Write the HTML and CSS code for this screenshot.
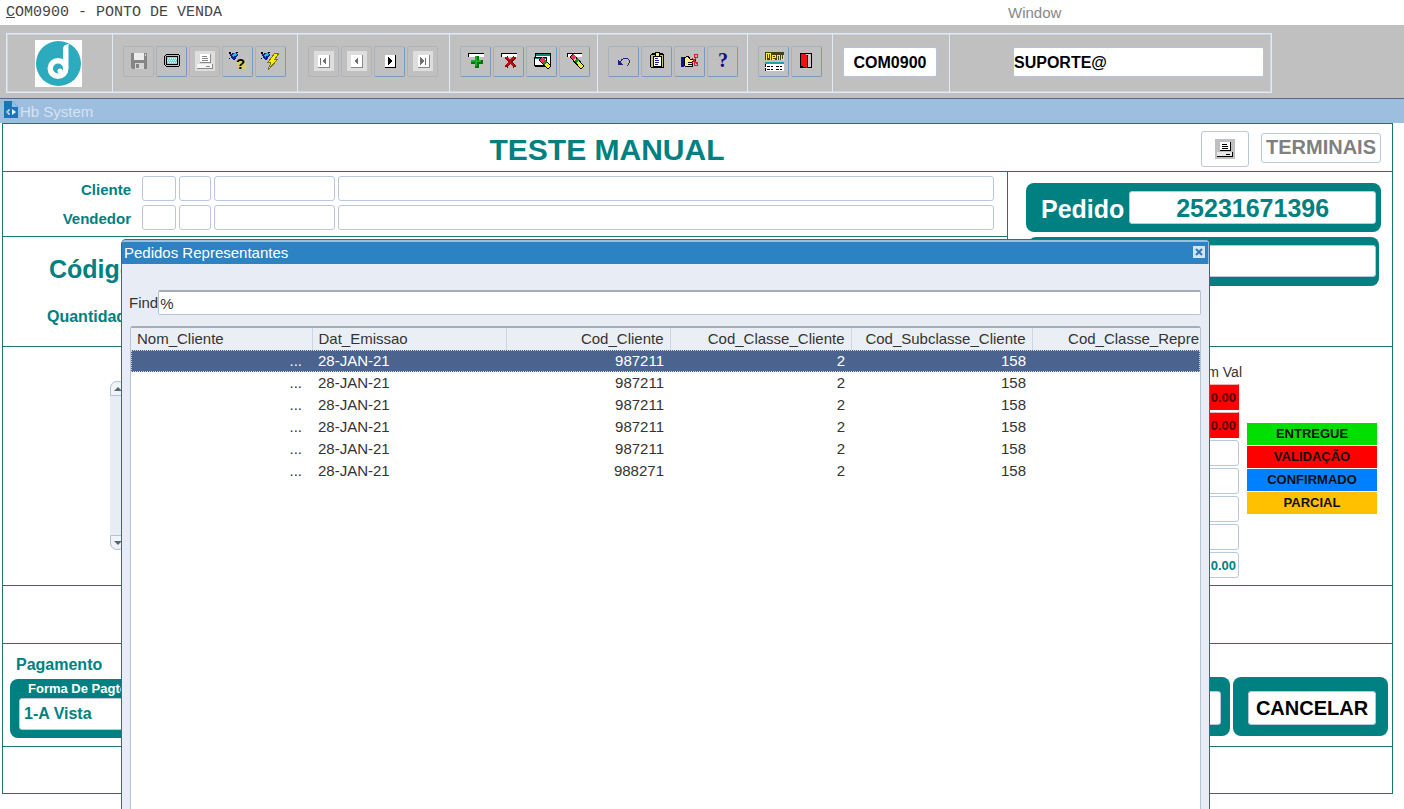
FILE: index.html
```html
<!DOCTYPE html>
<html lang="pt-BR">
<head>
<meta charset="UTF-8">
<meta name="viewport" content="width=device-width, initial-scale=1.0">
<title>COM0900 - PONTO DE VENDA</title>
<link rel="stylesheet" href="styles.css">
</head>
<body>
<nav class="menubar">
    <a class="menu-program" href="#"><u>C</u>OM0900 - PONTO DE VENDA</a>
    <a class="menu-window" href="#">Window</a>
</nav>

<header class="toolbar">
    <div class="frame">
        <div class="group group-logo">
            <svg class="logo" viewBox="0 0 47 47">
                <rect width="47" height="47" fill="#fff"/>
                <circle cx="23.5" cy="23.5" r="22.5" fill="#2cabbf"/>
                <circle cx="23" cy="28.500" r="10.500" fill="#fff"/>
                <path d="M28 9C28 6 30 4.500 34 4C33 6 33.500 8 33.500 11V28L28 29Z" fill="#fff"/>
                <circle cx="23" cy="28.500" r="5" fill="#2cabbf"/>
                <circle cx="25" cy="31" r="2.500" fill="#fff"/>
            </svg>
        </div>
        <div class="group">
            <button class="tool off" type="button" aria-label="Salvar" disabled>
                <svg viewBox="0 0 20 20"><path d="M2 2H18V18H3L2 17Z" fill="#858585"/><path d="M5 2H15V9H5Z" fill="#ececec"/><path d="M6 12H15V18H6Z" fill="#d5d5d5"/><path d="M7 13H10V17H7Z" fill="#858585"/><path d="M16 3H17V5H16Z" fill="#ddd"/></svg>
            </button>
            <button class="tool" type="button" aria-label="Tela">
                <svg viewBox="0 0 20 20"><path d="M4 3H16L18 5V14L16 16H4L2 14V5Z" fill="#000"/><path d="M4 4H16L17 5V14L16 15H4L3 14V5Z" fill="#bbb"/><path d="M4 5H16V14H4Z" fill="#000"/><path d="M5 6H15V13H5Z" fill="#80d8e0"/><path d="M6 7.500H15M5 9.500H14M6 11.500H15" stroke="#d8ffff" stroke-dasharray="1 1"/></svg>
            </button>
            <button class="tool off" type="button" aria-label="Imprimir" disabled>
                <svg viewBox="0 0 20 20"><path d="M0 0H20V20H0Z" fill="#dedede"/><path d="M5 3H15V11H5Z" fill="#fff"/><path d="M15.500 3V11.500H5" stroke="#888" fill="none"/><path d="M7 5.500H12M7 7.500H13M7 9.500H13" stroke="#888"/><path d="M2 13H18V18H2Z" fill="#f6f6f6"/><path d="M2 17.500H18M11 15.500H15M17.500 13V18" stroke="#888"/></svg>
            </button>
            <button class="tool" type="button" aria-label="Ajuda da consulta">
                <svg viewBox="0 0 20 20"><path d="M2 3L8 1L10 4L6 10L3 7Z" fill="#102090"/><path d="M4 4L8 1L9 4L5 6Z" fill="#28c0c8"/><path d="M1 1H3V3H1ZM8 1H10V2H8ZM1 7H2V8H1Z" fill="#000"/><path d="M9 9H18V18H10Z" fill="#d9cf72"/><text class="glyph" x="8" y="18">?</text></svg>
            </button>
            <button class="tool" type="button" aria-label="Executar consulta">
                <svg viewBox="0 0 20 20"><path d="M1 3L7 1L9 4L5 10L2 7Z" fill="#102090"/><path d="M3 4L7 1L8 4L4 6Z" fill="#28c0c8"/><path d="M0 1H2V3H0ZM7 1H9V2H7ZM0 7H1V8H0Z" fill="#000"/><path d="M14 2H18L14 8H17L7 19L10 11H7Z" fill="#ffee00" stroke="#777700"/></svg>
            </button>
        </div>
        <div class="group">
            <button class="tool off" type="button" aria-label="Primeiro" disabled>
                <svg viewBox="0 0 20 20"><path d="M0 0H20V20H0Z" fill="#dedede"/><path d="M4 4H15V16H4Z" fill="#fff"/><path d="M15.500 4V16.500H4" fill="none" stroke="#888"/><path d="M6 7H7V14H6ZM12 6V14L8 10Z" fill="#707070"/></svg>
            </button>
            <button class="tool off" type="button" aria-label="Anterior" disabled>
                <svg viewBox="0 0 20 20"><path d="M0 0H20V20H0Z" fill="#dedede"/><path d="M4 4H15V16H4Z" fill="#fff"/><path d="M15.500 4V16.500H4" fill="none" stroke="#888"/><path d="M11 6V14L7 10Z" fill="#707070"/></svg>
            </button>
            <button class="tool" type="button" aria-label="Próximo">
                <svg viewBox="0 0 20 20"><path d="M5 4H15V16H5Z" fill="#fff"/><path d="M15.500 4V16.500H5" fill="none" stroke="#000"/><path d="M8 6V14L12 10Z" fill="#000"/></svg>
            </button>
            <button class="tool off" type="button" aria-label="Último" disabled>
                <svg viewBox="0 0 20 20"><path d="M0 0H20V20H0Z" fill="#dedede"/><path d="M5 4H16V16H5Z" fill="#fff"/><path d="M16.500 4V16.500H5" fill="none" stroke="#888"/><path d="M7 6V14L11 10ZM12 7H13V14H12Z" fill="#707070"/></svg>
            </button>
        </div>
        <div class="group">
            <button class="tool" type="button" aria-label="Inserir registro">
                <svg viewBox="0 0 20 20"><path d="M2 2H18V6H2Z" fill="#fff"/><path d="M18 2.500H2.500V6" fill="none" stroke="#000"/><path d="M9 5H13V9H17V13H13V17H9V13H5V9H9Z" fill="#087010"/><path d="M9 5H11V9H15V11H11V15H9V11H5V9H9Z" fill="#18b028"/></svg>
            </button>
            <button class="tool" type="button" aria-label="Excluir registro">
                <svg viewBox="0 0 20 20"><path d="M2 2H18V6H2Z" fill="#fff"/><path d="M18 2.500H2.500V6" fill="none" stroke="#000"/><path d="M7 6L16 16M16 6L7 16" stroke="#800408" stroke-width="3"/><path d="M7 6L15 15M15 6L7 15" stroke="#b81018" stroke-width="2"/></svg>
            </button>
            <button class="tool" type="button" aria-label="Limpar tela">
                <svg viewBox="0 0 20 20"><path d="M3 2H18V15H3Z" fill="#fff" stroke="#000"/><path d="M4 3H18V5H4Z" fill="#108080"/><path d="M2 6H14V14H2Z" fill="#fff" stroke="#000"/><path d="M3 7H14V8H3Z" fill="#108080"/><path d="M7 9L10 6L19 15L16 18Z" fill="#f0e830" stroke="#000"/><path d="M7 9L10 6L13 9L10 12Z" fill="#f03060"/><path d="M10 12L13 9L15 11L12 14Z" fill="#109020"/></svg>
            </button>
            <button class="tool" type="button" aria-label="Limpar registro">
                <svg viewBox="0 0 20 20"><path d="M2 2H17V6H2Z" fill="#fff"/><path d="M17 2.500H2.500V6" fill="none" stroke="#000"/><path d="M5 6L8 3L19 15L16 18Z" fill="#f0e830" stroke="#000"/><path d="M5 6L8 3L11 6L8 9Z" fill="#f03060"/><path d="M9 10L12 7L14 9L11 12Z" fill="#109020"/></svg>
            </button>
        </div>
        <div class="group">
            <button class="tool" type="button" aria-label="Desfazer">
                <svg viewBox="0 0 20 20"><path d="M6 11C8 7 13 6 15 9C16 11 15 13 13 15" fill="none" stroke="#202080"/><path d="M4 9V14H9Z" fill="#202080"/></svg>
            </button>
            <button class="tool" type="button" aria-label="Lista">
                <svg viewBox="0 0 20 20"><path d="M3 4L5 2H16L17 4V16L16 17H4L3 16Z" fill="#000"/><path d="M4 4H16V16H4Z" fill="#c9c35e"/><path d="M6 5H14V15H6Z" fill="#fff" stroke="#000"/><path d="M8 1H12V5H8Z" fill="#f0f080" stroke="#000"/><path d="M8 7.500H11M8 9.500H12M8 11.500H12M8 13.500H11" stroke="#202090"/></svg>
            </button>
            <button class="tool" type="button" aria-label="Recortar">
                <svg viewBox="0 0 20 20"><path d="M1 6H4V16H1Z" fill="#101090"/><path d="M4 7L8 5L10 8H15V10H12V15H5Z" fill="#f0ee90" stroke="#000"/><path d="M8 11.500H12M8 13.500H12" stroke="#000"/><path d="M12 12L17 6M12 7L17 13" stroke="#d02030"/><circle cx="16" cy="5" r="2" fill="none" stroke="#d02030"/><circle cx="16" cy="13" r="2" fill="none" stroke="#d02030"/></svg>
            </button>
            <button class="tool" type="button" aria-label="Ajuda">
                <svg viewBox="0 0 20 20"><text class="glyph glyph-help" x="5" y="16">?</text></svg>
            </button>
        </div>
        <div class="group">
            <button class="tool" type="button" aria-label="Menu">
                <svg viewBox="0 0 20 20"><path d="M1 1H20V9H1Z" fill="#444410"/><path d="M2.500 9V2.500H6.500V9M4.500 2V7M11 8.500H8.500V4.500H11.500V6.500H8M13.500 9V4.500H15.500V9M17.500 4V8.500H19.500V4" fill="none" stroke="#ffee20"/><path d="M1 11H20V13H1Z" fill="#20a0a8"/><path d="M1 13H20V20H1Z" fill="#fff"/><path d="M1.500 13V20M3 15.500H9M3 18.500H9M12 15.500H18M12 18.500H18" stroke="#000" stroke-dasharray="3 1"/></svg>
            </button>
            <button class="tool" type="button" aria-label="Sair">
                <svg viewBox="0 0 20 20"><path d="M3 2H15V17H3Z" fill="#000"/><path d="M9 3H14V16H9Z" fill="#c8c8c8"/><path d="M4 3H8L10 5V17L4 15Z" fill="#f01010"/><path d="M10.500 4V17" stroke="#000"/></svg>
            </button>
        </div>
        <div class="group">
            <input class="tb-input tb-code" type="text" value="COM0900" aria-label="Programa">
        </div>
        <div class="group group-user">
            <input class="tb-input tb-user" type="text" value="SUPORTE@" aria-label="Usuário">
        </div>
    </div>
</header>

<main class="desktop">
    <div class="titlebar">
        <svg class="doc-icon" viewBox="0 0 14 17"><path d="M0 0H8L14 6V17H0Z" fill="#1e74b8"/><path d="M8 0V6H14Z" fill="#8fc0e4"/><path d="M8 8L12 11L8 14Z" fill="#fff"/><path d="M2 11H3M6 9H4V13H6" stroke="#fff" fill="none"/></svg>
        <span>Hb System</span>
    </div>

    <form class="pos">
        <div class="row row-title">
            <h1>TESTE MANUAL</h1>
            <button class="btn btn-print" type="button" aria-label="Imprimir pedido">
                <svg viewBox="0 0 20 20"><path d="M0 0H20V20H0Z" fill="#c0c0c0"/><path d="M5 3H15V11H5Z" fill="#fff"/><path d="M15.500 3V11.500H5M7 5.500H12M7 7.500H13M7 9.500H13" stroke="#000" fill="none"/><path d="M2 13H17V17H2Z" fill="#e8e8e8"/><path d="M2 17.500H18M11 15.500H15M17.500 13V18" stroke="#000"/></svg>
            </button>
            <button class="btn btn-term" type="button">TERMINAIS</button>
        </div>

        <div class="top">
            <div class="top-left">
                <div class="people">
                    <label for="cliente">Cliente</label>
                    <input id="cliente" class="field" type="text">
                    <input class="field" type="text" aria-label="Cliente classe">
                    <input class="field" type="text" aria-label="Cliente código">
                    <input class="field" type="text" aria-label="Cliente nome">
                    <label for="vendedor">Vendedor</label>
                    <input id="vendedor" class="field" type="text">
                    <input class="field" type="text" aria-label="Vendedor classe">
                    <input class="field" type="text" aria-label="Vendedor código">
                    <input class="field" type="text" aria-label="Vendedor nome">
                </div>
                <div class="product">
                    <span class="codigo">Código</span>
                    <span class="quantidade">Quantidade</span>
                </div>
            </div>
            <div class="top-right">
                <div class="box box-pedido">
                    <label for="pedido">Pedido</label>
                    <input id="pedido" class="field" type="text" value="25231671396">
                </div>
                <div class="box box-valor">
                    <input class="field" type="text" aria-label="Valor">
                </div>
            </div>
        </div>

        <div class="row row-items">
            <div class="scroll">
                <button type="button" aria-label="Subir"><svg viewBox="0 0 8 4"><path d="M0 4L4 0L8 4Z" fill="#56657c"/></svg></button>
                <button type="button" aria-label="Descer"><svg viewBox="0 0 8 4"><path d="M0 0H8L4 4Z" fill="#56657c"/></svg></button>
            </div>
            <div class="values">
                <span class="values-head">Item Val</span>
                <input class="field red" type="text" value="0.00" aria-label="Valor 1">
                <input class="field red" type="text" value="0.00" aria-label="Valor 2">
                <input class="field" type="text" aria-label="Valor 3">
                <input class="field" type="text" aria-label="Valor 4">
                <input class="field" type="text" aria-label="Valor 5">
                <input class="field" type="text" aria-label="Valor 6">
                <input class="field" type="text" value="0.00" aria-label="Total">
            </div>
            <ul class="legend">
                <li class="entregue">ENTREGUE</li>
                <li class="validacao">VALIDAÇÃO</li>
                <li class="confirmado">CONFIRMADO</li>
                <li class="parcial">PARCIAL</li>
            </ul>
        </div>

        <div class="row row-blank"></div>

        <div class="row row-pay">
            <div class="pay">
                <span class="pay-title">Pagamento</span>
                <div class="box box-forma">
                    <label for="forma">Forma De Pagto</label>
                    <input id="forma" class="field" type="text" value="1-A Vista">
                </div>
            </div>
            <div class="box box-action box-ok"><button class="btn" type="button" aria-label="Confirmar"></button></div>
            <div class="box box-action"><button class="btn" type="button">CANCELAR</button></div>
        </div>

        <div class="row row-foot"></div>
    </form>

    <section class="dialog" role="dialog" aria-label="Pedidos Representantes">
        <div class="dialog-title">
            <span>Pedidos Representantes</span>
            <button class="close" type="button" aria-label="Fechar"><svg viewBox="0 0 12 12"><path d="M3 3L9 9M9 3L3 9" stroke="#2e78b8" stroke-width="2"/></svg></button>
        </div>
        <div class="dialog-body">
            <div class="find">
                <label for="find">Find</label>
                <input id="find" type="text" value="%">
            </div>
            <div class="grid">
                <table>
                    <colgroup>
                        <col class="c-nome"><col class="c-data"><col class="c-cod"><col class="c-classe"><col class="c-classe"><col>
                    </colgroup>
                    <thead>
                        <tr><th class="txt">Nom_Cliente</th><th class="txt">Dat_Emissao</th><th>Cod_Cliente</th><th>Cod_Classe_Cliente</th><th>Cod_Subclasse_Cliente</th><th class="last">Cod_Classe_Repre</th></tr>
                    </thead>
                    <tbody>
                        <tr class="selected"><td class="more">...</td><td class="txt">28-JAN-21</td><td>987211</td><td>2</td><td>158</td><td></td></tr>
                        <tr><td class="more">...</td><td class="txt">28-JAN-21</td><td>987211</td><td>2</td><td>158</td><td></td></tr>
                        <tr><td class="more">...</td><td class="txt">28-JAN-21</td><td>987211</td><td>2</td><td>158</td><td></td></tr>
                        <tr><td class="more">...</td><td class="txt">28-JAN-21</td><td>987211</td><td>2</td><td>158</td><td></td></tr>
                        <tr><td class="more">...</td><td class="txt">28-JAN-21</td><td>987211</td><td>2</td><td>158</td><td></td></tr>
                        <tr><td class="more">...</td><td class="txt">28-JAN-21</td><td>988271</td><td>2</td><td>158</td><td></td></tr>
                    </tbody>
                </table>
            </div>
        </div>
    </section>
</main>
</body>
</html>
```
FILE: styles.css
```css
* {
    box-sizing: border-box;
}
body {
    margin: 0;
    min-height: 100vh;
    display: flex;
    flex-direction: column;
    background-color: #fff;
    color: #333;
    font-family: "Liberation Sans", Arial, sans-serif;
    font-size: 15px;
}
input, button {
    font-family: inherit;
    margin: 0;
    padding: 0;
    min-width: 0;
}
svg {
    display: block;
}

/* menu */
.menubar {
    display: flex;
    align-items: center;
    height: 25px;
    padding-left: 6px;
}
.menubar a {
    text-decoration: none;
}
.menu-program {
    flex: 0 0 1002px;
    color: #444;
    font-family: "Liberation Mono", "Courier New", monospace;
    font-size: 15px;
}
.menu-window {
    color: #888;
}

/* toolbar */
.toolbar {
    display: flex;
    height: 73px;
    padding: 8px 6px 5px;
    background-color: #c0c0c0;
}
.frame {
    display: grid;
    grid-template-columns: 105px 185px 152px 148px 150px 85px 117px 322px;
    border: 1px solid #e2eaf8;
    box-shadow: inset 0 0 0 1px #ccd4e0;
}
.group {
    display: flex;
    gap: 2px;
    padding: 12px 0 0 10px;
    border-left: 1px solid #e2eaf8;
}
.group-logo {
    padding: 6px 0 0 28px;
    border-left: 0;
}
.group-user {
    padding-left: 63px;
}
.logo {
    width: 47px;
    height: 47px;
}
.tool {
    display: flex;
    align-items: center;
    justify-content: center;
    width: 31px;
    height: 31px;
    padding-bottom: 2px;
    background-color: #c0c0c0;
    border: 1px solid #a8b0b8;
    border-right-color: #7c98ba;
    border-bottom-color: #7c98ba;
    border-radius: 2px;
}
.tool.off {
    border-color: #b0b4b8;
}
.tool svg {
    width: 20px;
    height: 20px;
    shape-rendering: crispEdges;
}
.glyph {
    font-size: 15px;
    font-weight: bold;
}
.tool .glyph-help {
    fill: #101080;
    font-family: "Liberation Serif", "Times New Roman", serif;
    font-size: 20px;
}
.tool svg:has(.glyph-help) {
    overflow: visible;
}
.tb-input {
    height: 30px;
    margin-top: 1px;
    padding-top: 2px;
    border: 1px solid #b4c4dc;
    border-radius: 2px;
    background-color: #fff;
    color: #000;
    font-size: 16px;
    font-weight: bold;
}
.tb-code {
    width: 94px;
    text-align: center;
}
.tb-user {
    width: 251px;
}

/* form window */
.desktop {
    position: relative;
    flex: 1;
    overflow: hidden;
}
.titlebar {
    display: flex;
    align-items: center;
    gap: 2px;
    height: 25px;
    padding-left: 4px;
    border-top: 1px solid #56698a;
    background-color: #9dbede;
    color: #d5e3f2;
}
.doc-icon {
    width: 14px;
    height: 17px;
    margin-bottom: 4px;
}
.pos {
    margin: 0 11px 0 2px;
    border: 1px solid #187870;
    color: #008080;
    font-weight: bold;
}
.row {
    display: flex;
    border-top: 1px solid #187870;
}
.field {
    border: 1px solid #b8c8de;
    border-radius: 3px;
    background-color: #fff;
    color: #008080;
    font-weight: bold;
}
.btn {
    border: 1px solid #b8c8de;
    border-radius: 3px;
    background-color: #fff;
}
.box {
    background-color: #008080;
    border-radius: 8px;
}

.row-title {
    align-items: center;
    height: 47px;
    padding-right: 11px;
    border-top: 0;
}
h1 {
    flex: 1;
    margin: 5px 0 0 10px;
    font-size: 30px;
    line-height: 36px;
    text-align: center;
}
.btn-print {
    display: flex;
    align-items: center;
    justify-content: center;
    width: 48px;
    height: 36px;
    margin: 3px 12px 0 0;
}
.btn-print svg {
    width: 20px;
    height: 20px;
    shape-rendering: crispEdges;
}
.btn-term {
    width: 120px;
    height: 30px;
    color: #808080;
    font-size: 20px;
    font-weight: bold;
}

.top {
    display: flex;
    border-top: 1px solid #187870;
}
.top-left {
    flex: 1;
    border-right: 1px solid #187870;
}
.people {
    display: grid;
    grid-template-columns: 136px 34px 32px 121px 1fr;
    column-gap: 3px;
    row-gap: 4px;
    padding: 4px 13px 6px 0;
}
.people .field {
    height: 25px;
}
.people label {
    padding-right: 8px;
    line-height: 27px;
    height: 25px;
    text-align: right;
}
.product {
    display: flex;
    flex-direction: column;
    gap: 21px;
    height: 110px;
    padding: 17px 0 0 44px;
    border-top: 1px solid #187870;
}
.codigo {
    padding-left: 2px;
    font-size: 25px;
    line-height: 30px;
}
.quantidade {
    font-size: 16px;
    line-height: 24px;
}
.top-right {
    width: 384px;
    padding: 11px 11px 0 18px;
}
.box-pedido {
    display: flex;
    align-items: center;
    height: 49px;
    padding: 0 5px 0 15px;
    color: #fff;
    font-size: 25px;
}
.box-pedido label {
    padding-top: 3px;
}
.box-pedido .field {
    flex: 1;
    height: 33px;
    padding-top: 2px;
    margin-left: 5px;
    font-size: 25px;
    text-align: center;
}
.box-valor {
    height: 49px;
    margin: 5px 2px 0;
    padding: 8px 3px;
}
.box-valor .field {
    width: 100%;
    height: 32px;
}

.row-items {
    height: 239px;
    padding-right: 15px;
}
.scroll {
    display: flex;
    flex-direction: column;
    justify-content: space-between;
    width: 15px;
    height: 169px;
    margin: 34px auto 0 107px;
    border-radius: 7px;
    background-color: #e8edf5;
}
.scroll button {
    display: flex;
    align-items: center;
    justify-content: center;
    height: 15px;
    border: 1px solid #b4c2d4;
    border-radius: 7px 7px 0 0;
    background-color: #f0f4f9;
}
.scroll button + button {
    border-radius: 0 0 7px 7px;
}
.scroll svg {
    width: 8px;
    height: 4px;
}
.values {
    display: flex;
    flex-direction: column;
    gap: 2px;
    width: 90px;
    padding-top: 15px;
}
.values-head {
    margin-right: -3px;
    color: #333;
    font-size: 14px;
    font-weight: normal;
    line-height: 20px;
    text-align: right;
}
.values .field {
    height: 26px;
    padding-right: 2px;
    font-size: 13px;
    text-align: right;
}
.values .red {
    border-color: #f0b0b0 #f00 #f00;
    border-radius: 0;
    background-color: #f00;
    color: #500;
}
.legend {
    display: flex;
    flex-direction: column;
    gap: 1px;
    width: 130px;
    margin: 76px 0 0 8px;
    padding: 0;
    list-style-type: none;
    color: #111;
    font-size: 13px;
    line-height: 22px;
    text-align: center;
}
.entregue {
    background-color: #00e000;
}
.validacao {
    background-color: #f00;
}
.confirmado {
    background-color: #0080ff;
}
.parcial {
    background-color: #ffc000;
}

.row-blank {
    height: 58px;
}
.row-pay {
    align-items: flex-start;
    gap: 3px;
    height: 103px;
    padding: 33px 4px 0 7px;
}
.pay {
    width: 400px;
    margin: -24px auto 0 0;
}
.pay-title {
    display: block;
    padding: 0 0 2px 6px;
    font-size: 16px;
    line-height: 24px;
}
.box-forma {
    height: 59px;
    padding: 1px 9px;
}
.box-forma label {
    display: block;
    padding-left: 9px;
    color: #fff;
    font-size: 13px;
    line-height: 18px;
}
.box-forma .field {
    width: 100%;
    height: 32px;
    padding-left: 4px;
    font-size: 16px;
}
.box-action {
    width: 155px;
    height: 59px;
    padding: 14px 12px 0 15px;
}
.box-action .btn {
    width: 128px;
    height: 34px;
    color: #000;
    font-size: 20px;
    font-weight: bold;
}
.box-ok {
    padding: 14px 9px 0 18px;
}
.row-foot {
    height: 47px;
}

/* dialog */
.dialog {
    position: absolute;
    top: 141px;
    bottom: 0;
    left: 121px;
    right: 194px;
    display: flex;
    flex-direction: column;
    border: 1px solid #4c5f84;
    border-bottom: 0;
    border-radius: 5px 5px 0 0;
    background-color: #e8edf5;
    overflow: hidden;
}
.dialog-title {
    display: flex;
    align-items: center;
    justify-content: space-between;
    height: 24px;
    padding: 0 3px 2px 2px;
    border: solid #9dbede;
    border-width: 2px 1px 0 0;
    background-color: #2b83c4;
    color: #fff;
}
.close {
    width: 12px;
    height: 12px;
    border: 0;
    background-color: #cfe6f8;
}
.dialog-body {
    display: flex;
    flex-direction: column;
    flex: 1;
    gap: 11px;
    padding: 26px 8px 0 8px;
}
.find {
    display: flex;
    align-items: center;
    margin-left: -1px;
}
.find input {
    flex: 1;
    height: 25px;
    padding-left: 1px;
    border: 1px solid #b4c2d4;
    border-top: 2px solid #a4acb8;
    border-radius: 2px;
    color: #333;
    font-size: 15px;
}
.grid {
    flex: 1;
    border: 1px solid #b4c2d8;
    border-top: 2px solid #a4acb8;
    border-bottom: 0;
    border-radius: 3px 3px 0 0;
    background-color: #fff;
    overflow: hidden;
}
table {
    width: 100%;
    table-layout: fixed;
    border-collapse: collapse;
}
.c-nome {
    width: 181px;
}
.c-data {
    width: 194px;
}
.c-cod {
    width: 164px;
}
.c-classe {
    width: 181px;
}
th, td {
    height: 22px;
    padding: 0 6px;
    line-height: 20px;
    text-align: right;
    font-weight: normal;
    white-space: nowrap;
}
th {
    padding-bottom: 1px;
    border-right: 1px solid #ccd6e4;
    background-color: #eaeff5;
}
.txt {
    text-align: left;
}
th.last {
    padding-right: 1px;
    border-right: 0;
}
td.more {
    padding-right: 10px;
}
.selected {
    background-color: #4a648f;
    color: #fff;
    outline: 1px dotted #c8d4e8;
    outline-offset: -1px;
}
```
